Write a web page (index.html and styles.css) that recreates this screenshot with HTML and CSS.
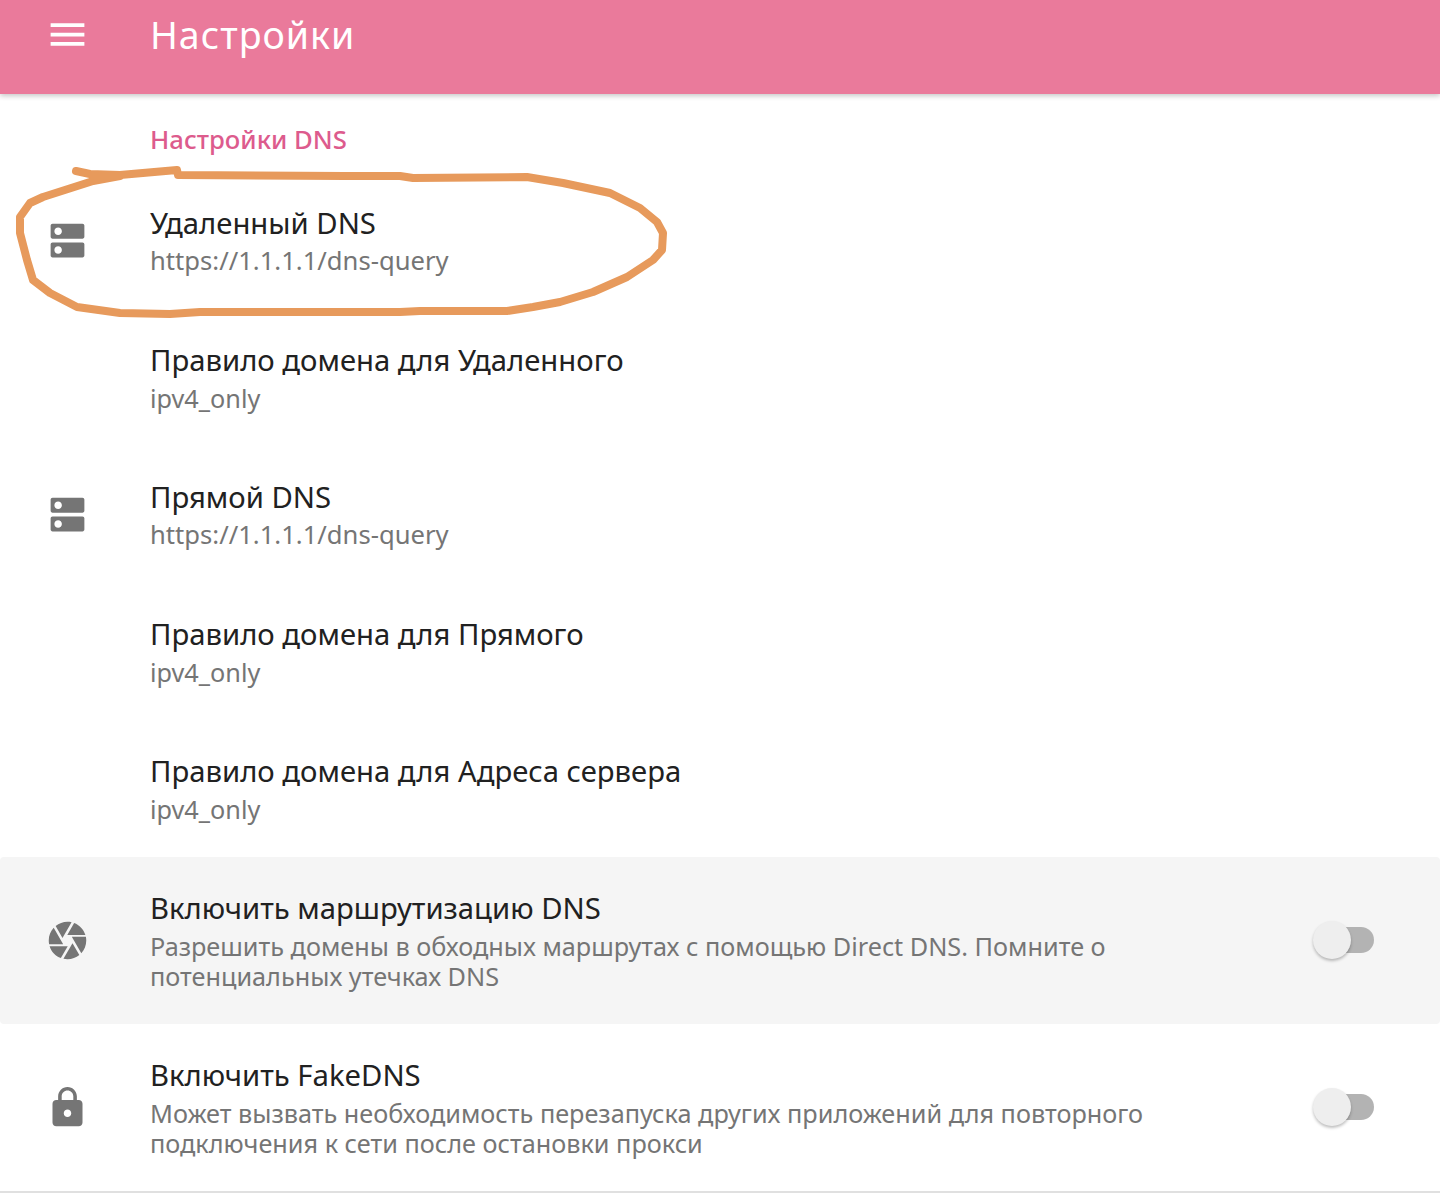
FILE: index.html
```html
<!DOCTYPE html>
<html lang="ru">
<head>
    <meta charset="UTF-8">
    <meta name="viewport" content="width=device-width, initial-scale=1.0">
    <title>Настройки</title>
    <link rel="stylesheet" href="styles.css">
</head>
<body>
    <header class="toolbar">
        <svg class="icon icon-white" viewBox="0 0 24 24"><path d="M3 18h18v-2H3v2zm0-5h18v-2H3v2zm0-7v2h18V6H3z"/></svg>
        <h1 class="toolbar-title">Настройки</h1>
    </header>
    <main class="settings">
        <h2 class="section-title">Настройки DNS</h2>
        <div class="row">
            <div class="row-icon">
                <svg class="icon" viewBox="0 0 24 24"><path d="M20 13H4c-.55 0-1 .45-1 1v6c0 .55.45 1 1 1h16c.55 0 1-.45 1-1v-6c0-.55-.45-1-1-1zM7 19c-1.1 0-2-.9-2-2s.9-2 2-2 2 .9 2 2-.9 2-2 2zM20 3H4c-.55 0-1 .45-1 1v6c0 .55.45 1 1 1h16c.55 0 1-.45 1-1V4c0-.55-.45-1-1-1zM7 9c-1.1 0-2-.9-2-2s.9-2 2-2 2 .9 2 2-.9 2-2 2z"/></svg>
            </div>
            <div class="row-text">
                <div class="row-title">Удаленный DNS</div>
                <div class="row-summary row-url">https://1.1.1.1/dns-query</div>
            </div>
        </div>
        <div class="row">
            <div class="row-icon"></div>
            <div class="row-text">
                <div class="row-title">Правило домена для Удаленного</div>
                <div class="row-summary">ipv4_only</div>
            </div>
        </div>
        <div class="row">
            <div class="row-icon">
                <svg class="icon" viewBox="0 0 24 24"><path d="M20 13H4c-.55 0-1 .45-1 1v6c0 .55.45 1 1 1h16c.55 0 1-.45 1-1v-6c0-.55-.45-1-1-1zM7 19c-1.1 0-2-.9-2-2s.9-2 2-2 2 .9 2 2-.9 2-2 2zM20 3H4c-.55 0-1 .45-1 1v6c0 .55.45 1 1 1h16c.55 0 1-.45 1-1V4c0-.55-.45-1-1-1zM7 9c-1.1 0-2-.9-2-2s.9-2 2-2 2 .9 2 2-.9 2-2 2z"/></svg>
            </div>
            <div class="row-text">
                <div class="row-title">Прямой DNS</div>
                <div class="row-summary row-url">https://1.1.1.1/dns-query</div>
            </div>
        </div>
        <div class="row">
            <div class="row-icon"></div>
            <div class="row-text">
                <div class="row-title">Правило домена для Прямого</div>
                <div class="row-summary">ipv4_only</div>
            </div>
        </div>
        <div class="row">
            <div class="row-icon"></div>
            <div class="row-text">
                <div class="row-title">Правило домена для Адреса сервера</div>
                <div class="row-summary">ipv4_only</div>
            </div>
        </div>
        <div class="row row-tall row-pressed">
            <div class="row-icon">
                <svg class="icon" viewBox="0 0 24 24"><path d="M9.4 10.5l4.77-8.26C13.47 2.09 12.75 2 12 2c-2.4 0-4.6.85-6.32 2.25l3.66 6.35.06-.1zM21.54 9c-.92-2.92-3.15-5.26-6-6.34L11.88 9h9.66zm.26 1h-7.49l.29.5 4.76 8.25C21 16.97 22 14.61 22 12c0-.69-.07-1.35-.2-2zM8.54 12l-3.9-6.75C3.01 7.03 2 9.39 2 12c0 .69.07 1.35.2 2h7.49l-1.15-2zm-6.08 3c.92 2.92 3.15 5.26 6 6.34L12.12 15H2.46zm11.27 0l-3.9 6.76c.7.15 1.42.24 2.17.24 2.4 0 4.6-.85 6.32-2.25l-3.66-6.35-.93 1.6z"/></svg>
            </div>
            <div class="row-text">
                <div class="row-title">Включить маршрутизацию DNS</div>
                <div class="row-summary">Разрешить домены в обходных маршрутах с помощью Direct DNS. Помните о потенциальных утечках DNS</div>
            </div>
            <div class="switch"><span class="switch-thumb"></span></div>
        </div>
        <div class="row row-tall row-last">
            <div class="row-icon">
                <svg class="icon" viewBox="0 0 24 24"><path d="M18 8h-1V6c0-2.76-2.24-5-5-5S7 3.24 7 6v2H6c-1.1 0-2 .9-2 2v10c0 1.1.9 2 2 2h12c1.1 0 2-.9 2-2V10c0-1.1-.9-2-2-2zm-6 9c-1.1 0-2-.9-2-2s.9-2 2-2 2 .9 2 2-.9 2-2 2zm3.1-9H8.9V6c0-1.71 1.39-3.1 3.1-3.1 1.71 0 3.1 1.39 3.1 3.1v2z"/></svg>
            </div>
            <div class="row-text">
                <div class="row-title">Включить FakeDNS</div>
                <div class="row-summary">Может вызвать необходимость перезапуска других приложений для повторного подключения к сети после остановки прокси</div>
            </div>
            <div class="switch"><span class="switch-thumb"></span></div>
        </div>
    </main>
    <!-- hand drawn marker circle on top of the screenshot -->
    <svg class="marker" viewBox="0 0 700 340" width="700" height="340">
        <path d="M76 171 L90 174 L120 175 L177 170 L178 175 L345 176 L400 176 L413 178 L527 177 L563 183 L610 193 L640 208 L657 222 L663 233 L662 250 L653 260 L627 277 L593 292 L560 302 L533 307 L507 311 L420 311 L400 312 L200 312 L170 314 L120 313 L77 307 L50 293 L33 280 L27 260 L20 233 L20 217 L30 203 L43 197 L93 181 L120 176"/>
    </svg>
</body>
</html>
```

FILE: styles.css
```css
* {
    box-sizing: border-box;
}
html, body {
    height: 100%;
}
body {
    margin: 0;
    background-color: #ffffff;
    font-family: "Noto Sans", sans-serif;
    overflow: hidden;
}

/* Top bar */
.toolbar {
    display: flex;
    align-items: center;
    height: 94px;
    padding-bottom: 25px;
    padding-left: 45px;
    background-color: #ea7a9b;
    box-shadow: 0 2px 5px rgba(0, 0, 0, 0.22);
    position: relative;
}
.toolbar-title {
    margin: 0 0 0 60px;
    font-size: 37.5px;
    font-weight: 400;
    letter-spacing: 1px;
    color: #ffffff;
}

.icon {
    display: block;
    width: 45px;
    height: 45px;
    fill: #757575;
}
.icon-white {
    fill: #ffffff;
}

/* List */
.section-title {
    margin: 0;
    height: 78px;
    padding: 29px 0 0 150px;
    font-size: 25.7px;
    line-height: 34px;
    font-weight: 500;
    color: #dd5b8d;
}
.row {
    display: flex;
    align-items: center;
    height: 137px;
    padding-right: 66px;
}
.row-tall {
    height: 167px;
}
.row-pressed {
    background-color: #f5f5f5;
    border-radius: 4px;
}
.row-last {
    border-bottom: 2px solid #e0e0e0;
    height: 169px;
}
.row-icon {
    flex: none;
    display: flex;
    justify-content: center;
    width: 135px;
}
.row-text {
    flex: 1;
    margin-left: 15px;
    padding-right: 150px;
    padding-bottom: 1px;
}
.row-title {
    margin-bottom: 4px;
    font-size: 29.25px;
    line-height: 38px;
    color: #212121;
}
.row-summary {
    font-size: 25.25px;
    line-height: 30px;
    color: #757575;
}
.row-url {
    font-size: 25.6px;
}

/* Switch, always off here */
.switch {
    flex: none;
    position: relative;
    top: -1px;
    width: 54px;
    height: 26px;
    border-radius: 13px;
    background-color: #b3b3b3;
}
.switch-thumb {
    position: absolute;
    left: -7px;
    top: -6px;
    width: 38px;
    height: 38px;
    border-radius: 50%;
    background-color: #eeeeee;
    box-shadow: 0 2px 3px rgba(0, 0, 0, 0.25);
}

.marker {
    position: absolute;
    left: 0;
    top: 0;
}
.marker path {
    fill: none;
    stroke: #e79a5c;
    stroke-width: 8;
    stroke-linejoin: round;
    stroke-linecap: round;
}
```
